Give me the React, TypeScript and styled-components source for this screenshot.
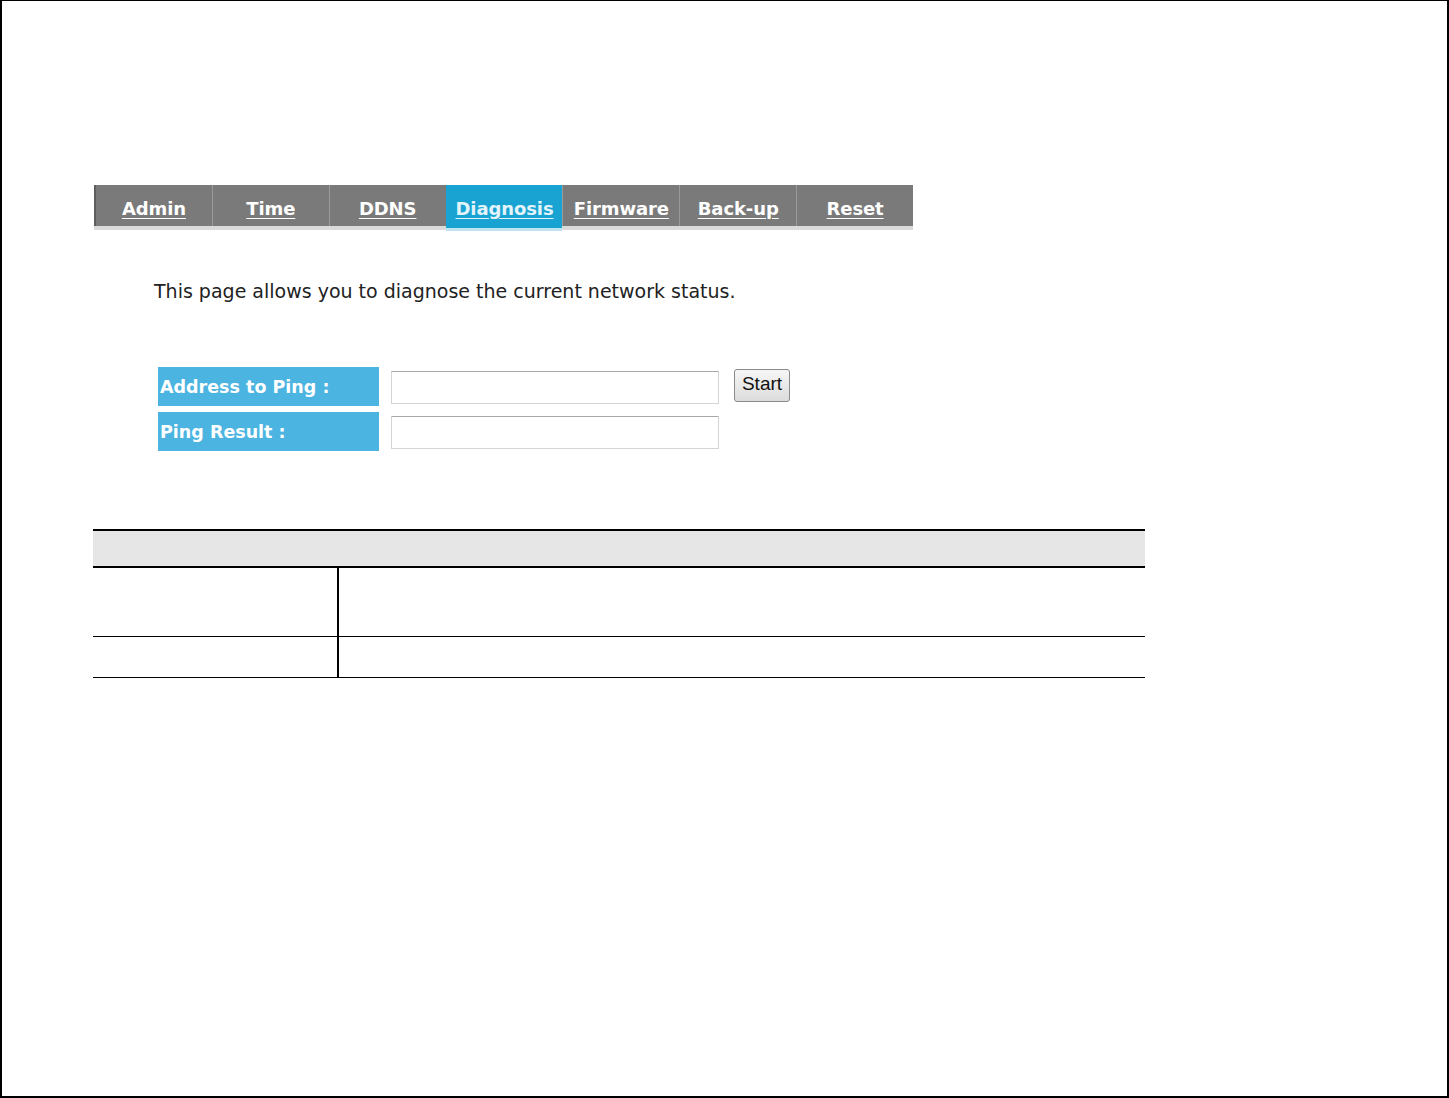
import React from "react";
import styled, { createGlobalStyle, css } from "styled-components";

const GlobalStyle = createGlobalStyle`
  html, body {
    margin: 0;
    padding: 0;
    background: #ffffff;
  }
  body {
    font-family: "DejaVu Sans", Verdana, sans-serif;
  }
`;

const tabs = ["Admin", "Time", "DDNS", "Diagnosis", "Firmware", "Back-up", "Reset"];
const activeTab = "Diagnosis";

const App = () => {
  return (
    <>
      <GlobalStyle />
      <Frame>
        <Content>
          <TabBar>
            {tabs.map((tab, i) => (
              <Tab key={tab} active={tab === activeTab} first={i === 0}>
                <TabLink href="#" active={tab === activeTab}>
                  {tab}
                </TabLink>
              </Tab>
            ))}
          </TabBar>

          <Intro>This page allows you to diagnose the current network status.</Intro>

          <PingForm>
            <FormRow>
              <Label>Address to Ping :</Label>
              <Field>
                <TextInput type="text" />
                <StartButton type="button">Start</StartButton>
              </Field>
            </FormRow>
            <FormRow>
              <Label>Ping Result :</Label>
              <Field>
                <TextInput type="text" />
              </Field>
            </FormRow>
          </PingForm>

          <InfoTable>
            <HeaderRow />
            <BodyRow tall>
              <KeyCell />
              <ValueCell />
            </BodyRow>
            <BodyRow>
              <KeyCell />
              <ValueCell />
            </BodyRow>
          </InfoTable>
        </Content>
      </Frame>
    </>
  );
};

export default App;

const Frame = styled.div`
  box-sizing: border-box;
  width: 1449px;
  height: 1098px;
  border: 2px solid #000;
  border-top-width: 1px;
  background: #fff;
  overflow: hidden;
`;

const Content = styled.div`
  padding: 184px 0 0 92px;
  display: flex;
  flex-direction: column;
  align-items: flex-start;
`;

const TabBar = styled.div`
  display: flex;
  align-items: flex-start;
  width: 819px;
  height: 41px;
  background: #7a7a7a;
  border-left: 2px solid #5e5e5e;
  box-sizing: border-box;
  box-shadow: 0 4px 0 #dadada;
`;

const Tab = styled.div(
  ({ active, first }: { active: boolean; first: boolean }) => css`
    flex: 1;
    height: 41px;
    box-sizing: border-box;
    padding-top: 14px;
    display: flex;
    justify-content: center;
    border-left: ${first ? "none" : "1px solid #9a9a9a"};
    ${active &&
    css`
      background: #18a3d3;
      height: 43px;
      box-shadow: 0 3px 0 #bfe3ef;
      border-left-color: #18a3d3;
    `}
  `
);

const TabLink = styled.a(
  ({ active }: { active: boolean }) => css`
    font-family: "DejaVu Sans", Verdana, sans-serif;
    font-weight: 700;
    font-size: 18px;
    line-height: 20px;
    color: ${active ? "#e2f4fa" : "#ffffff"};
    text-decoration: underline;
    text-underline-offset: 3px;
    letter-spacing: -0.1px;
  `
);

const Intro = styled.p`
  margin: 54px 0 0 60px;
  font-family: "DejaVu Sans", Verdana, sans-serif;
  font-size: 19px;
  color: #222;
`;

const PingForm = styled.div`
  margin: 65px 0 0 64px;
  display: flex;
  flex-direction: column;
  gap: 6px;
`;

const FormRow = styled.div`
  display: flex;
  align-items: flex-start;
  gap: 12px;
`;

const Label = styled.div`
  width: 221px;
  height: 39px;
  box-sizing: border-box;
  padding: 0 0 0 2px;
  display: flex;
  align-items: center;
  background: #4cb4e0;
  color: #ffffff;
  font-family: "DejaVu Sans", Verdana, sans-serif;
  font-weight: 700;
  font-size: 17.5px;
`;

const Field = styled.div`
  display: flex;
  align-items: flex-start;
  gap: 15px;
  padding-top: 4px;
`;

const TextInput = styled.input`
  box-sizing: border-box;
  width: 328px;
  height: 33px;
  margin: 0;
  border: 1px solid #d4d4d4;
  border-top-color: #a8a8a8;
  border-radius: 1px;
  background: #fff;
`;

const StartButton = styled.button`
  box-sizing: border-box;
  width: 56px;
  height: 33px;
  margin-top: -2px;
  border: 1px solid #8a8a8a;
  border-radius: 3px;
  background: linear-gradient(#f6f6f6, #dcdcdc);
  font-family: "Liberation Sans", Arial, sans-serif;
  font-size: 19px;
  color: #111;
  padding: 0 0 3px;
`;

const InfoTable = styled.div`
  margin: 78px 0 0 -1px;
  width: 1052px;
  display: flex;
  flex-direction: column;
  border-top: 2px solid #000;
`;

const HeaderRow = styled.div`
  height: 35px;
  background: #e6e6e6;
  border-bottom: 2px solid #000;
`;

const BodyRow = styled.div(
  ({ tall }: { tall?: boolean }) => css`
    display: flex;
    height: ${tall ? "68px" : "40px"};
    border-bottom: 1px solid #000;
  `
);

const KeyCell = styled.div`
  width: 244px;
  border-right: 2px solid #000;
`;

const ValueCell = styled.div`
  flex: 1;
`;
